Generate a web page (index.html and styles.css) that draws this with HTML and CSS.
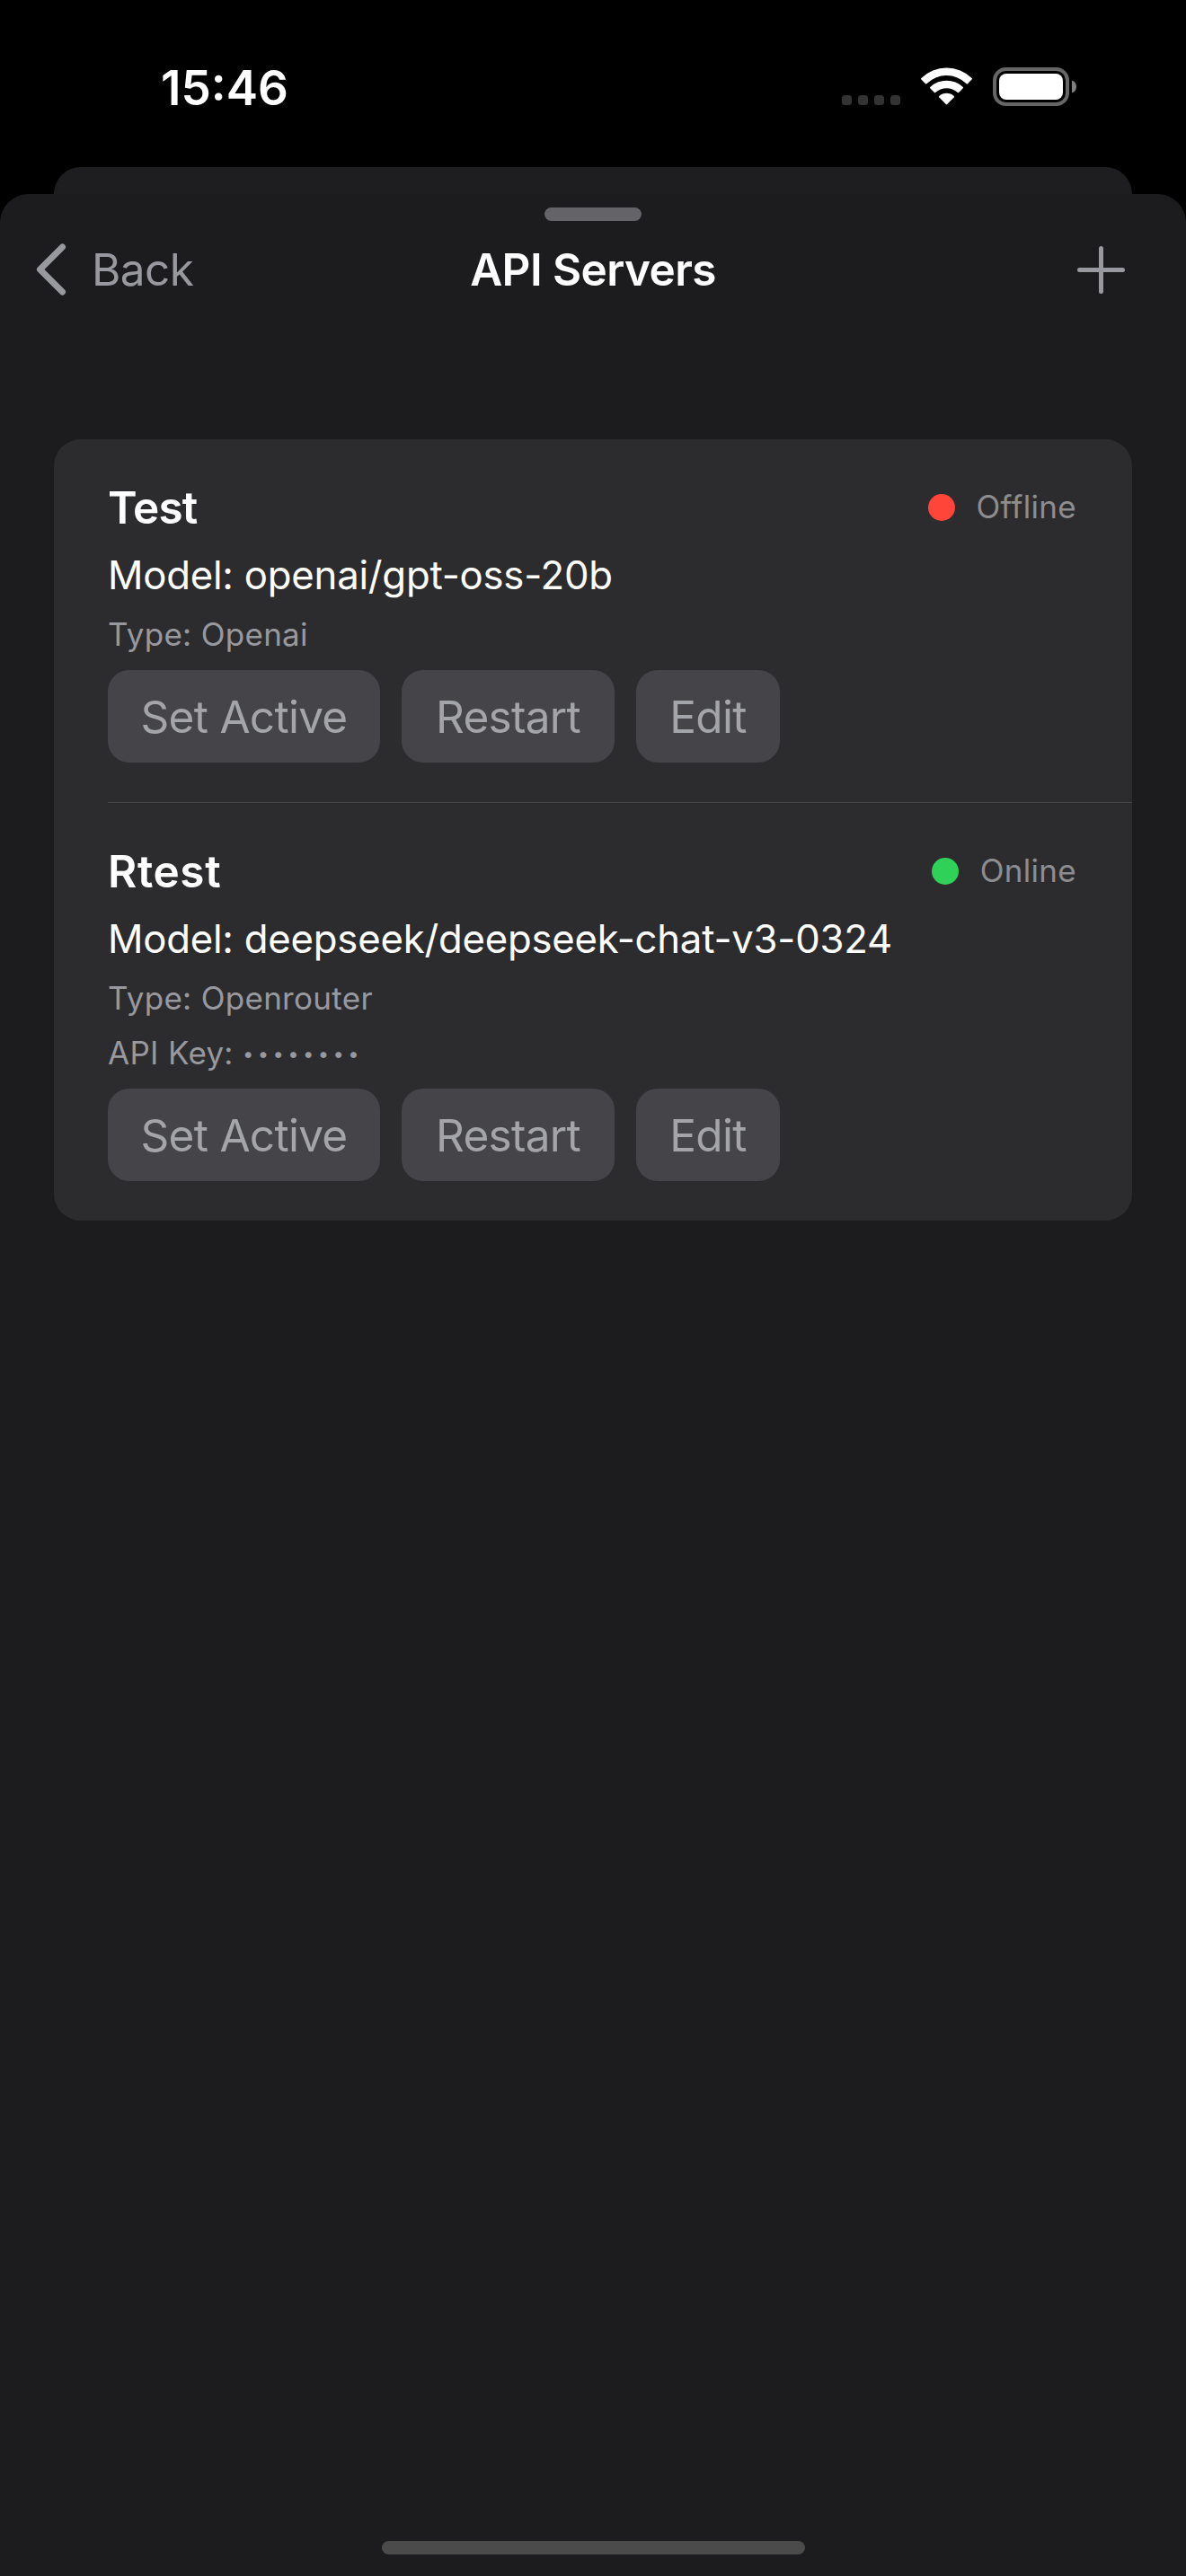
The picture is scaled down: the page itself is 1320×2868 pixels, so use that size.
FILE: index.html
```html
<!DOCTYPE html>
<html lang="en">
<head>
<meta charset="utf-8">
<title>API Servers</title>
<link rel="stylesheet" href="styles.css">
</head>
<body>
<div class="screen">
  <header class="status-bar">
    <span class="clock">15:46</span>
    <div class="status-icons">
      <svg class="signal" width="65" height="11" viewBox="0 0 65 11" fill="#333333">
        <rect width="11" height="11" rx="3.5"/>
        <rect x="18" width="11" height="11" rx="3.5"/>
        <rect x="36" width="11" height="11" rx="3.5"/>
        <rect x="54" width="11" height="11" rx="3.5"/>
      </svg>
      <svg class="wifi" width="57" height="42" viewBox="0 0 57 42" fill="#fff">
        <path d="M0.4 13.4A1 1 0 0 1 .4 12A40 40 0 0 1 56.6 12A1 1 0 0 1 56.6 13.4L51.9 18.2A1 1 0 0 1 50.7 18.2A31.5 31.5 0 0 0 6.300 18.2A1 1 0 0 1 5.1 18.2Z"/>
        <path d="M10.200 23.200A1 1 0 0 1 10.200 22A26.500 26.500 0 0 1 46.800 22A1 1 0 0 1 46.800 23.200L42 28A1 1 0 0 1 40.800 28A18 18 0 0 0 16.200 28A1 1 0 0 1 15 28Z"/>
        <path d="M20.200 33.200A1 1 0 0 1 20.200 32A12.500 12.500 0 0 1 36.800 32A1 1 0 0 1 36.800 33.200L29.200 41.100A1 1 0 0 1 27.800 41.100Z"/>
      </svg>
      <svg class="battery" width="94" height="43" viewBox="0 0 94 43">
        <rect x="2" y="2" width="81" height="39" rx="12.500" fill="none" stroke="#666" stroke-width="4"/>
        <rect x="7" y="7" width="71" height="29" rx="8" fill="#fff"/>
        <path d="M88 14.500C91 15.500 93 18 93 21.500S91 27.500 88 28.500Z" fill="#808080"/>
      </svg>
    </div>
  </header>
  <div class="sheet-behind"></div>
  <main class="sheet">
    <div class="grabber"></div>
    <nav class="nav-bar">
      <a class="back">
        <svg width="34" height="58" viewBox="0 0 34 58" fill="none" stroke="#98989f" stroke-width="7" stroke-linecap="round" stroke-linejoin="round"><path d="M29.500 4L4.500 29L29.500 54"/></svg>
        <span>Back</span>
      </a>
      <h1 class="title">API Servers</h1>
      <svg class="add" width="53" height="53" viewBox="0 0 53 53" fill="none" stroke="#98989f" stroke-width="5" stroke-linecap="round"><path d="M26.500 2.500V50.500M2.500 26.500H50.500"/></svg>
    </nav>
    <section class="servers">
      <article class="server">
        <div class="server-head">
          <h2 class="name">Test</h2>
          <div class="status"><i class="dot offline"></i><span class="status-text">Offline</span></div>
        </div>
        <p class="model">Model: openai/gpt-oss-20b</p>
        <p class="detail">Type: Openai</p>
        <div class="actions">
          <button class="btn activate">Set Active</button>
          <button class="btn restart">Restart</button>
          <button class="btn edit">Edit</button>
        </div>
      </article>
      <hr class="divider">
      <article class="server">
        <div class="server-head">
          <h2 class="name wide">Rtest</h2>
          <div class="status"><i class="dot online"></i><span class="status-text">Online</span></div>
        </div>
        <p class="model">Model: deepseek/deepseek-chat-v3-0324</p>
        <p class="detail">Type: Openrouter</p>
        <p class="detail key">API Key: <span class="mask">••••••••</span></p>
        <div class="actions">
          <button class="btn activate">Set Active</button>
          <button class="btn restart">Restart</button>
          <button class="btn edit">Edit</button>
        </div>
      </article>
    </section>
    <div class="home-indicator"></div>
  </main>
</div>
</body>
</html>
```
FILE: styles.css
```css
* { box-sizing: border-box; margin: 0; padding: 0; }

body {
  background: #000;
  color: #fff;
  font-family: Inter, "Liberation Sans", sans-serif;
  font-optical-sizing: none;
  font-variation-settings: "opsz" 14;
}

.screen {
  display: flex;
  flex-direction: column;
  width: 1320px;
  height: 2868px;
  overflow: hidden;
}

.status-bar {
  display: flex;
  justify-content: space-between;
  height: 186px;
  padding: 66px 121px 0 179px;
}
.clock {
  font-size: 53px;
  font-weight: 600;
  line-height: 64px;
  letter-spacing: 0;
}
.status-icons { display: flex; height: 52px; align-items: flex-end; }
.signal { margin: 0 23px 1px 0; }
.wifi { margin: 0 23px 1px 0; }

.sheet-behind {
  height: 30px;
  margin: 0 60px;
  background: #1e1e20;
  border-radius: 30px 30px 0 0;
}

.sheet {
  display: flex;
  flex-direction: column;
  flex: 1;
  background: #1c1c1e;
  border-radius: 32px 32px 0 0;
}
.grabber {
  width: 108px;
  height: 15px;
  margin: 15px auto 0;
  border-radius: 8px;
  background: #636368;
}

.nav-bar {
  display: grid;
  grid-template-columns: 1fr auto 1fr;
  align-items: center;
  height: 64px;
  margin: 22px 68px 157px 40px;
}
.back {
  display: flex;
  align-items: center;
  gap: 28px;
  color: #98989f;
  font-size: 49.5px;
  letter-spacing: -0.6px;
}
.title {
  margin-left: 28px;
  font-size: 49.5px;
  font-weight: 600;
  letter-spacing: -0.6px;
}
.add { justify-self: end; }

.servers {
  margin: 0 60px;
  border-radius: 30px;
  background: #2c2c2e;
}
.server { padding: 45px 62px 44px 60px; }
.server-head {
  display: flex;
  align-items: center;
  justify-content: space-between;
  height: 62px;
}
.name { font-size: 49.5px; font-weight: 600; letter-spacing: -0.8px; }
.wide { letter-spacing: 0.6px; }
.status {
  display: flex;
  align-items: center;
  gap: 24px;
  color: #8d8d8f;
  font-size: 35px;
  letter-spacing: 0.3px;
}
.status-text { padding-bottom: 2px; }
.dot { width: 30px; height: 30px; border-radius: 50%; }
.offline { background: #ff453a; }
.online { background: #30d158; }

.model { margin-top: 18px; font-size: 43.7px; line-height: 53px; letter-spacing: -0.22px; }
.detail { margin-top: 15px; color: #98989f; font-size: 35px; line-height: 48px; letter-spacing: 0.3px; }
.key { margin-top: 13px; }
.mask { font-size: 22px; line-height: 0; vertical-align: 4px; letter-spacing: 4.4px; }

.actions { display: flex; gap: 24px; margin-top: 16px; }
.btn {
  height: 103px;
  border: 0;
  border-radius: 24px;
  background: #454449;
  color: #a4a4ab;
  font: inherit;
  font-size: 49.5px;
  letter-spacing: -0.7px;
}
.activate { width: 303px; }
.restart { width: 237px; }
.edit { width: 160px; }

.divider { height: 1px; margin-left: 60px; border: 0; background: #464649; }

.home-indicator {
  width: 471px;
  height: 15px;
  margin: auto auto 24px 425px;
  border-radius: 8px;
  background: #4b4b4b;
}
```
